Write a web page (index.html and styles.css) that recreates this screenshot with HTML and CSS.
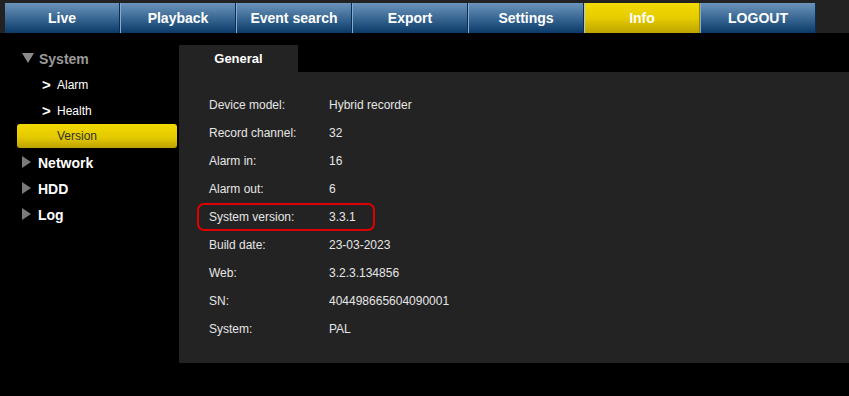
FILE: index.html
```html
<!DOCTYPE html>
<html lang="en">
<head>
  <meta charset="UTF-8">
  <title>Info - Version</title>
  <link rel="stylesheet" href="styles.css">
</head>
<body>
<!-- Top navigation -->
<div class="topbar">
  <div class="nav-btn first">Live</div>
  <div class="nav-btn">Playback</div>
  <div class="nav-btn">Event search</div>
  <div class="nav-btn">Export</div>
  <div class="nav-btn">Settings</div>
  <div class="nav-btn active">Info</div>
  <div class="nav-btn">LOGOUT</div>
</div>

<div class="main">
  <!-- Sidebar menu -->
  <div class="sidebar">
    <div class="menu-group open"><span class="tri-down"></span>System</div>
    <div class="menu-sub"><span class="chev">&gt;</span>Alarm</div>
    <div class="menu-sub"><span class="chev">&gt;</span>Health</div>
    <div class="menu-sub selected">Version</div>
    <div class="menu-group"><span class="tri-right"></span>Network</div>
    <div class="menu-group"><span class="tri-right"></span>HDD</div>
    <div class="menu-group"><span class="tri-right"></span>Log</div>
  </div>

  <!-- Content -->
  <div class="content">
    <div class="tabs">
      <div class="tab">General</div>
    </div>
    <div class="panel">
      <div class="row"><span class="label">Device model:</span><span class="value">Hybrid recorder</span></div>
      <div class="row"><span class="label">Record channel:</span><span class="value">32</span></div>
      <div class="row"><span class="label">Alarm in:</span><span class="value">16</span></div>
      <div class="row"><span class="label">Alarm out:</span><span class="value">6</span></div>
      <div class="row marked"><span class="label">System version:</span><span class="value">3.3.1</span></div>
      <div class="row"><span class="label">Build date:</span><span class="value">23-03-2023</span></div>
      <div class="row"><span class="label">Web:</span><span class="value">3.2.3.134856</span></div>
      <div class="row"><span class="label">SN:</span><span class="value">404498665604090001</span></div>
      <div class="row"><span class="label">System:</span><span class="value">PAL</span></div>
    </div>
  </div>
</div>
</body>
</html>
```

FILE: styles.css
```css
* {
  margin: 0;
  padding: 0;
  box-sizing: border-box;
}

body {
  font-family: 'Liberation Sans', Arial, sans-serif;
  background-color: #000;
  color: #e6e6e6;
  width: 849px;
  height: 396px;
  overflow: hidden;
}

/* Top bar */
.topbar {
  display: flex;
  height: 33px;
  padding: 3px 0 0 5px;
  background-color: #222;
}

.nav-btn {
  width: 116px;
  height: 30px;
  line-height: 30px;
  text-align: center;
  font-size: 14px;
  font-weight: bold;
  color: #fff;
  background: linear-gradient(to bottom, #6b94ba 0%, #3a6894 50%, #0c3a69 100%);
  border-left: 1px solid #86abcd;
  border-right: 1px solid #0a2c50;
}

.nav-btn.first {
  border-left: none;
  width: 115px;
}

.nav-btn.active {
  background: linear-gradient(to bottom, #f3da00 0%, #e6cc00 50%, #bea400 100%);
  border-left: 1px solid #b0c8de;
  border-right: 1px solid #9c8700;
}

/* Layout */
.main {
  display: flex;
}

/* Sidebar */
.sidebar {
  width: 179px;
  flex-shrink: 0;
  padding-top: 13px;
}

.menu-group {
  display: flex;
  align-items: center;
  height: 26px;
  padding-left: 21px;
  font-size: 14px;
  font-weight: bold;
  color: #fff;
}

.menu-group.open {
  color: #9a9a9a;
}

.tri-down {
  width: 0;
  height: 0;
  margin: 0 5px 2px 1px;
  border-left: 6px solid transparent;
  border-right: 6px solid transparent;
  border-top: 10px solid #8a8a8a;
}

.tri-right {
  width: 0;
  height: 0;
  margin: 0 7px 2px 1px;
  border-top: 6px solid transparent;
  border-bottom: 6px solid transparent;
  border-left: 9px solid #7a7a7a;
}

.menu-sub {
  display: flex;
  align-items: center;
  height: 26px;
  padding-left: 42px;
  font-size: 12px;
  color: #fff;
}

.chev {
  font-weight: bold;
  font-size: 15px;
  width: 15px;
  margin-top: -1px;
}

.menu-sub.selected {
  height: 24px;
  margin: 0 2px 2px 17px;
  padding-left: 40px;
  color: #333;
  border-radius: 3px;
  background: linear-gradient(to bottom, #f2d900 0%, #e4ca00 55%, #bda300 100%);
}

/* Content */
.content {
  flex: 1;
  margin-top: 12px;
}

.tabs {
  display: flex;
  height: 27px;
}

.tab {
  width: 119px;
  line-height: 28px;
  text-align: center;
  font-size: 13px;
  font-weight: bold;
  color: #fff;
  background-color: #232323;
}

.panel {
  height: 291px;
  padding: 19px 0 0 18px;
  background-color: #232323;
}

.row {
  display: flex;
  align-items: center;
  height: 28px;
  width: 178px;
  padding-left: 10px;
  border: 2px solid transparent;
  border-radius: 7px;
  font-size: 12px;
  white-space: nowrap;
}

.row.marked {
  border-color: #e00000;
}

.label {
  width: 120px;
  flex-shrink: 0;
}
```
